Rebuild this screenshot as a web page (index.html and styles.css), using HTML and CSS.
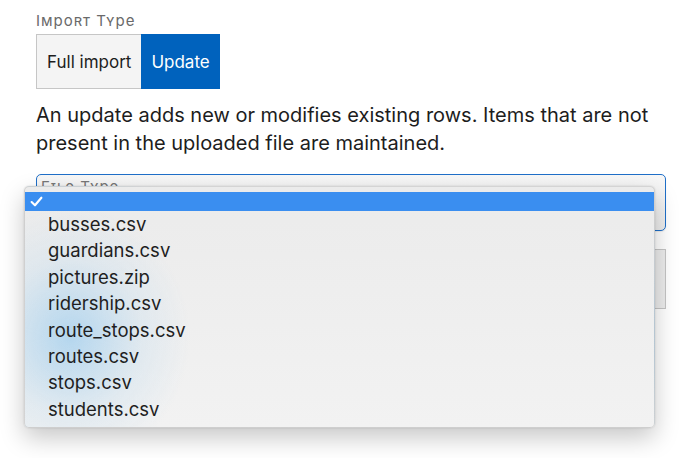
FILE: index.html
```html
<!DOCTYPE html>
<html lang="en">
<head>
<meta charset="utf-8">
<title>Import</title>
<link rel="stylesheet" href="styles.css">
</head>
<body>
<div class="page">
  <div class="field">
    <div class="label">Import Type</div>
    <div class="seg">
      <span class="seg-btn">Full import</span>
      <span class="seg-btn active">Update</span>
    </div>
    <p class="help">An update adds new or modifies existing rows. Items that are not present in the uploaded file are maintained.</p>
  </div>
  <div class="select-box"><span class="label">File Type</span></div>
  <div class="file-btn"></div>
  <div class="menu">
    <div class="opt selected"><svg class="check" viewBox="0 0 12 12" width="13" height="13"><path d="M1.5 6.5 L4.6 9.5 L10.5 2.5" fill="none" stroke="#fff" stroke-width="2" stroke-linecap="round" stroke-linejoin="round"/></svg></div>
    <div class="opt">busses.csv</div>
    <div class="opt">guardians.csv</div>
    <div class="opt">pictures.zip</div>
    <div class="opt">ridership.csv</div>
    <div class="opt">route_stops.csv</div>
    <div class="opt">routes.csv</div>
    <div class="opt">stops.csv</div>
    <div class="opt">students.csv</div>
  </div>
</div>
</body>
</html>
```

FILE: styles.css
```css
html, body {
  margin: 0;
  padding: 0;
  background: #ffffff;
}
body {
  font-family: Inter, "Noto Sans", "Liberation Sans", sans-serif;
  color: #1d1d1d;
}
.page {
  position: relative;
  width: 686px;
  height: 458px;
  padding: 11px 20px 0 36px;
  box-sizing: border-box;
  display: flex;
  flex-direction: column;
}
.field {
  display: flex;
  flex-direction: column;
  align-items: flex-start;
}
.label {
  font-size: 15px;
  line-height: 19px;
  font-variant: small-caps;
  letter-spacing: 1px;
  color: #6a6a6a;
}
.seg {
  display: flex;
  margin-top: 4px;
  border: 1px solid #c6c6c6;
  height: 53px;
}
.seg-btn {
  display: flex;
  align-items: center;
  padding: 0 10px;
  font-size: 17px;
  background: #f4f4f4;
  color: #1d1d1d;
}
.seg-btn.active {
  background: #0062bd;
  color: #ffffff;
  margin: -1px -1px -1px 0;
  padding: 1px 10px;
}
.help {
  margin: 12px 0 0 0;
  font-size: 20px;
  line-height: 28px;
  color: #1d1d1d;
  width: 630px;
}
.select-box {
  margin-top: 17px;
  height: 53px;
  border: 1px solid #1f6fc8;
  border-radius: 5px;
  background: linear-gradient(#f7f7f7, #ececec);
  padding: 1px 4px;
  box-shadow: 0 1px 1px rgba(0,0,0,0.08);
}
.select-box .label {
  color: #777;
}
.file-btn {
  margin-top: 18px;
  height: 58px;
  border: 1px solid #c4c4c4;
  background: #ececec;
}
.menu {
  position: absolute;
  left: 24px;
  top: 186px;
  width: 631px;
  height: 242px;
  box-sizing: border-box;
  padding-top: 5px;
  border-radius: 5px;
  border: 1px solid rgba(0,0,0,0.12);
  background:
    radial-gradient(ellipse 120px 130px at 45px 150px, rgba(170,210,238,0.85), rgba(190,218,238,0.3) 60%, rgba(235,235,235,0) 100%),
    linear-gradient(#ebebeb, #f2f2f2);
  box-shadow: 0 10px 24px rgba(0,0,0,0.22), 0 0 2px rgba(0,0,0,0.15);
  overflow: hidden;
}
.opt {
  height: 26.4px;
  line-height: 26.4px;
  padding-left: 23px;
  font-size: 18.5px;
  color: #1f1f1f;
  white-space: nowrap;
}
.opt.selected {
  height: 19px;
  line-height: 19px;
  background: #3a8ef0;
  padding-left: 5px;
  display: flex;
  align-items: center;
}
.check {
  display: block;
}
```
